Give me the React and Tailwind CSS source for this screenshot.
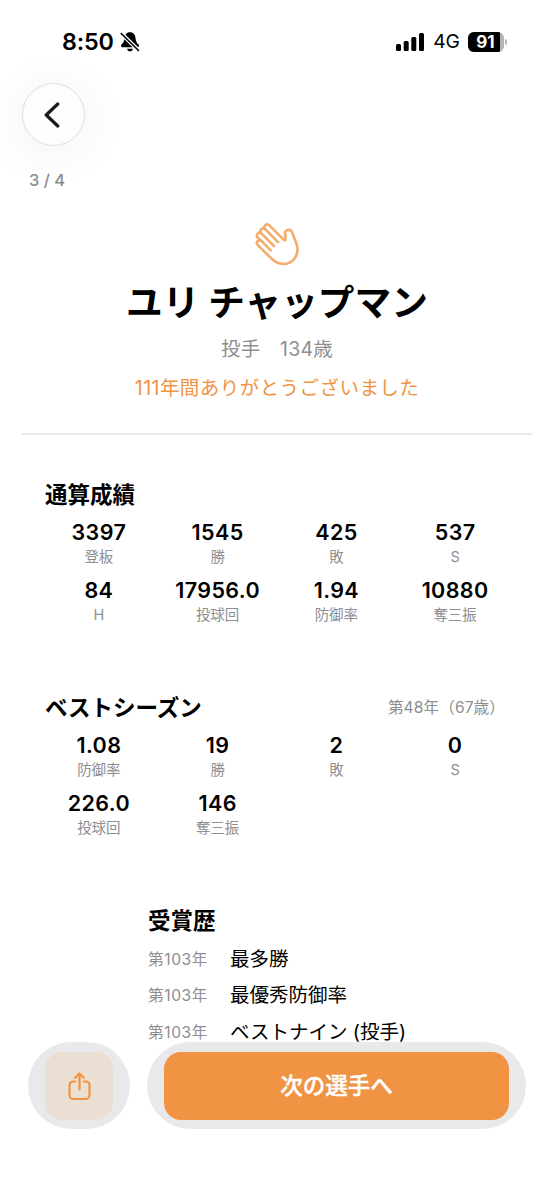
const careerStats = [
  { value: '3397', label: '登板' },
  { value: '1545', label: '勝' },
  { value: '425', label: '敗' },
  { value: '537', label: 'S' },
  { value: '84', label: 'H' },
  { value: '17956.0', label: '投球回' },
  { value: '1.94', label: '防御率' },
  { value: '10880', label: '奪三振' },
];

const bestSeason = [
  { value: '1.08', label: '防御率' },
  { value: '19', label: '勝' },
  { value: '2', label: '敗' },
  { value: '0', label: 'S' },
  { value: '226.0', label: '投球回' },
  { value: '146', label: '奪三振' },
];

const awards = [
  { year: '第103年', name: '最多勝' },
  { year: '第103年', name: '最優秀防御率' },
  { year: '第103年', name: 'ベストナイン (投手)' },
];

function BellOff() {
  return (
    <svg width="20" height="20" viewBox="0 0 20 20" className="ml-[6px]">
      <path d="M10 .3C6.500.3 4.700 2.800 4.500 6c-.2 3.500-1.300 4.800-3 6.400-1 1-.5 2.800.9 2.800h15.200c1.400 0 1.900-1.800.9-2.800-1.700-1.600-2.800-2.900-3-6.400C15.300 2.800 13.500.3 10 .3z" />
      <path d="M7 16.700h6c-.3 1.600-1.500 2.600-3 2.600s-2.700-1-3-2.600z" />
      <path d="M.5.8l18.500 18" stroke="#fff" strokeWidth="4" />
      <path d="M1.200 1.500l17.300 17" stroke="#000" strokeWidth="1.600" strokeLinecap="round" />
    </svg>
  );
}

function StatusBar() {
  return (
    <div className="flex h-[83px] items-center pr-[47px] pl-[62px]">
      <span className="text-[23.300px] leading-none font-semibold tracking-[-0.2px]">8:50</span>
      <BellOff />
      <svg width="28" height="18" viewBox="0 0 28 18" className="ml-auto">
        <rect x="0" y="11" width="5" height="7" rx="1.500" />
        <rect x="7.700" y="8" width="5" height="10" rx="1.500" />
        <rect x="15.300" y="4" width="5" height="14" rx="1.500" />
        <rect x="23" y="0" width="5" height="18" rx="1.500" />
      </svg>
      <span className="mt-px ml-[9px] text-[19.300px] leading-none">4G</span>
      <div className="ml-[8px] flex h-5 w-9 items-center overflow-hidden rounded-[6px] bg-[#b4b4b4]">
        <div className="flex h-5 w-8 items-center justify-center bg-black pt-px pl-[3px] text-[17px] leading-none font-bold text-white">91</div>
      </div>
      <div className="ml-px h-[6px] w-[2px] rounded-r-full bg-[#b4b4b4]" />
    </div>
  );
}

function WavingHand() {
  return (
    <svg width="44" height="44" viewBox="15 15 132 132" fill="none" stroke="#f3ae6d" strokeWidth="8" strokeLinecap="round" strokeLinejoin="round">
      <path d="M84 72L46 34c-9-9 4-20 13-11l42 42c3 3 7 2 6-3l-2-13c-1-14 16-18 21-6l13 33c6 17 4 35-8 49-16 17-44 18-64-1L24 82c-9-9 2-20 12-12l26 27" />
      <path d="M46 34c-9-8-20 3-12 12l38 38" />
      <path d="M34 46c-10-6-18 5-10 14l12 10" />
    </svg>
  );
}

function ShareIcon() {
  return (
    <svg width="23" height="29" viewBox="0 0 23 29" fill="none" stroke="#f09343" strokeWidth="2.200" strokeLinecap="round" strokeLinejoin="round" className="mt-[2px]">
      <path d="M7 9.500H5.200A3.700 3.700 0 0 0 1.500 13.200v10.100A3.700 3.700 0 0 0 5.200 27h12.600a3.700 3.700 0 0 0 3.700-3.700V13.200a3.700 3.700 0 0 0-3.700-3.700H16" />
      <path d="M11.500 17.500V1.500M7.200 5.800l4.300-4.300 4.300 4.300" />
    </svg>
  );
}

function StatGrid({ stats }) {
  return (
    <div className="grid grid-cols-4 gap-x-[11px]">
      {stats.map((s) => (
        <div key={s.value + s.label} className="flex h-[58px] flex-col items-center">
          <span className="text-[21.500px] leading-[27px] font-semibold tracking-[0.4px]">{s.value}</span>
          <span className="text-[14.500px] leading-[22px] text-[#8e8e93]">{s.label}</span>
        </div>
      ))}
    </div>
  );
}

export default function App() {
  return (
    <div className="relative h-[1200px] w-[554px] overflow-hidden bg-white font-['Inter','Noto_Sans_CJK_JP',sans-serif] text-black">
      <StatusBar />

      <div className="h-[140px] px-[22px]">
        <button className="flex size-[63px] items-center justify-center rounded-full border border-[#dedede] bg-[#fdfdfd] shadow-[0_6px_44px_8px_rgba(0,0,0,0.045)]">
          <svg width="16" height="26" viewBox="0 0 16 26" fill="none" stroke="#1a1a1a" strokeWidth="3.200" strokeLinecap="round" strokeLinejoin="round" className="-ml-[4px]">
            <path d="M13.800 2L2.200 13l11.600 11" />
          </svg>
        </button>
        <p className="mt-[24px] pl-[7px] text-[16.500px] leading-5 font-medium text-[#8a8a8e]">3 / 4</p>
      </div>

      <header className="flex h-[210px] flex-col items-center">
        <WavingHand />
        <h1 className="mt-[14px] text-[36.700px] leading-[44px] font-bold">ユリ チャップマン</h1>
        <p className="mt-[10px] text-[19.500px] leading-[28px] tracking-[0.2px] text-[#8e8e93]">投手　134歳</p>
        <p className="mt-[11px] text-[19.500px] leading-[28px] tracking-[0.45px] text-[#f09343]">111年間ありがとうございました</p>
      </header>

      <div className="mx-[22px] h-[2px] bg-[#e9e9ea]" />

      <section className="mt-[45px] px-[45px]">
        <h2 className="mb-[9px] text-[22.500px] leading-[30px] font-bold">通算成績</h2>
        <StatGrid stats={careerStats} />
      </section>

      <section className="mt-[58px] px-[45px]">
        <div className="mb-[9px] flex items-center justify-between">
          <h2 className="text-[22.500px] leading-[30px] font-bold">ベストシーズン</h2>
          <span className="pr-[4px] text-[15.600px] leading-[30px] tracking-[0.1px] text-[#8e8e93]">第48年（67歳）</span>
        </div>
        <StatGrid stats={bestSeason} />
      </section>

      <section className="mt-[58px] pl-[148px]">
        <h2 className="text-[22.500px] leading-[30px] font-bold">受賞歴</h2>
        <ul className="mt-[5px]">
          {awards.map((a) => (
            <li key={a.name} className="flex h-[36.700px] items-center">
              <span className="w-[82px] text-[15.600px] tracking-[0.6px] text-[#8e8e93]">{a.year}</span>
              <span className="text-[19.500px]">{a.name}</span>
            </li>
          ))}
        </ul>
      </section>

      {/* floating actions over the scrolled list */}
      <div className="absolute inset-x-[28px] top-[1042px] flex h-[87px] gap-[17px]">
        <div className="flex w-[102px] items-center justify-center rounded-[44px] bg-[#e9e9eb]">
          <button className="flex size-[68px] items-center justify-center rounded-[17px] bg-[#ebdfd4]">
            <ShareIcon />
          </button>
        </div>
        <div className="flex flex-1 items-center justify-center rounded-[44px] bg-[#e9e9eb] px-[17px]">
          <button className="h-[68px] w-full rounded-[17px] bg-[#f09343] text-[22.500px] font-medium text-white [-webkit-text-stroke:0.4px_white]">次の選手へ</button>
        </div>
      </div>
    </div>
  );
}
